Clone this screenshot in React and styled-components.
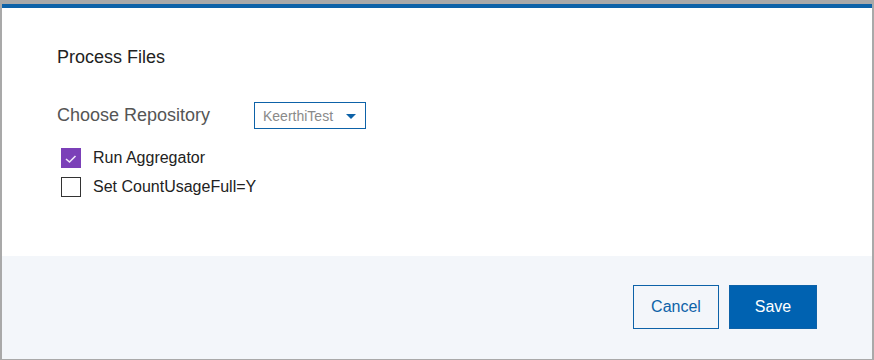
import React from 'react'
import styled, { createGlobalStyle } from 'styled-components'

const GlobalStyle = createGlobalStyle`
  html, body {
    margin: 0;
    padding: 0;
    background: #a8a8a8;
    font-family: "Liberation Sans", Arial, sans-serif;
  }
`
const Frame = styled.div`
  width: 874px;
  height: 360px;
  box-sizing: border-box;
  padding: 4px 2px 5px 2px;
  background: #a9a9a9;
`
const Modal = styled.div`
  height: 100%;
  display: flex;
  flex-direction: column;
  background: #fff;
  border-top: 4px solid #0d62a8;
`
const Body = styled.div`
  height: 248px;
  box-sizing: border-box;
  padding: 39px 0 0 55px;
`
const Title = styled.h2`
  margin: 0;
  font-size: 18px;
  font-weight: 400;
  color: #222;
  line-height: 21px;
`
const RepoRow = styled.div`
  display: flex;
  align-items: center;
  margin-top: 34px;
`
const Label = styled.span`
  width: 197px;
  font-size: 18px;
  color: #555;
`
const Select = styled.div`
  width: 112px;
  height: 27px;
  box-sizing: border-box;
  border: 1px solid #0d62a8;
  display: flex;
  align-items: center;
  justify-content: space-between;
  padding: 0 9px 0 8px;
  font-size: 14px;
  color: #8a8a8a;
`
const Caret = styled.span`
  width: 0;
  height: 0;
  border-left: 5px solid transparent;
  border-right: 5px solid transparent;
  border-top: 5px solid #0d62a8;
  margin-top: 2px;
`
const Options = styled.div`
  display: flex;
  flex-direction: column;
  gap: 9px;
  margin-top: 19px;
  padding-left: 4px;
`
const Option = styled.label`
  display: flex;
  align-items: center;
  gap: 12px;
  font-size: 16px;
  color: #222;
`
const Box = styled.span`
  width: 20px;
  height: 20px;
  box-sizing: border-box;
  display: flex;
  align-items: center;
  justify-content: center;
  background: ${({ checked }) => checked ? '#7b40b8' : '#fff'};
  border: 1px solid ${({ checked }) => checked ? '#7b40b8' : '#333'};
`
const Footer = styled.div`
  flex: 1;
  background: #f3f6fa;
  display: flex;
  justify-content: flex-end;
  align-items: center;
  gap: 10px;
  padding: 0 55px 2px 0;
`
const Button = styled.button`
  height: 44px;
  width: ${({ primary }) => primary ? 88 : 86}px;
  box-sizing: border-box;
  font-family: inherit;
  font-size: 16px;
  border: 1px solid #0d62a8;
  background: ${({ primary }) => primary ? '#0062b1' : 'transparent'};
  color: ${({ primary }) => primary ? '#fff' : '#0d62a8'};
`

const Check = () => (
  <svg width="16" height="16" viewBox="0 0 16 16">
    <path d="M3 9 L6.5 12 L12.5 6" fill="none" stroke="#f0e6fa" strokeWidth="1.6" />
  </svg>
)

const App = () => (
  <>
    <GlobalStyle />
    <Frame>
      <Modal>
        <Body>
          <Title>Process Files</Title>
          <RepoRow>
            <Label>Choose Repository</Label>
            <Select>
              KeerthiTest
              <Caret />
            </Select>
          </RepoRow>
          <Options>
            <Option>
              <Box checked><Check /></Box>
              Run Aggregator
            </Option>
            <Option>
              <Box />
              Set CountUsageFull=Y
            </Option>
          </Options>
        </Body>
        <Footer>
          <Button>Cancel</Button>
          <Button primary>Save</Button>
        </Footer>
      </Modal>
    </Frame>
  </>
)

export default App
